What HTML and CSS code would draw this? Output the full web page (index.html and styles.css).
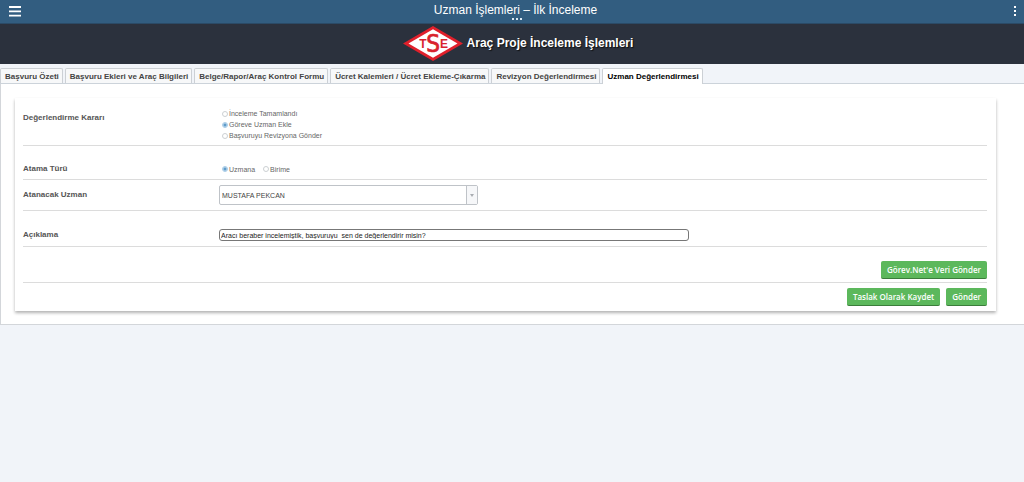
FILE: index.html
```html
<!DOCTYPE html>
<html lang="tr">
<head>
<meta charset="utf-8">
<meta name="viewport" content="width=device-width, initial-scale=1">
<title>Uzman İşlemleri – İlk İnceleme</title>
<link rel="stylesheet" href="styles.css">
</head>
<body>
<header class="topbar">
  <button class="icon-button" type="button" aria-label="Menü">
    <svg width="12" height="11" viewBox="0 0 12 11"><path d="M0 1h12M0 5.300h12M0 9.600h12" stroke="#fff" stroke-width="1.800"/></svg>
  </button>
  <h1 class="topbar-title">Uzman İşlemleri – İlk İnceleme
    <svg class="title-dots" width="10" height="2" viewBox="0 0 10 2"><path d="M0 0h2v2H0zM4 0h2v2H4zM8 0h2v2H8z" fill="#dbe8f3"/></svg>
  </h1>
  <button class="icon-button icon-button-end" type="button" aria-label="Diğer">
    <svg width="2" height="12" viewBox="0 0 2 12"><path d="M0 0h2v2H0zM0 4h2v2H0zM0 8h2v2H0z" fill="#fff"/></svg>
  </button>
</header>
<div class="brand">
  <svg class="brand-logo" width="60" height="36" viewBox="0 0 60 36" role="img" aria-label="TSE">
    <path d="M30 0L60 17.500L30 35L0 17.500Z" fill="#e0202b"/>
    <path d="M30 3.200L54.500 17.500L30 31.800L5.500 17.500Z" fill="#fff"/>
    <g fill="#d9232e" text-anchor="middle" class="logo-text">
      <text x="20" y="22" font-size="12">T</text>
      <text class="logo-tall" x="30" y="26" font-size="24" stroke="#d9232e" stroke-width="0.700">S</text>
      <text x="41" y="22" font-size="12">E</text>
    </g>
  </svg>
  <h2 class="brand-title">Araç Proje İnceleme İşlemleri</h2>
</div>
<nav class="tabs">
  <button class="tab" type="button">Başvuru Özeti</button>
  <button class="tab" type="button">Başvuru Ekleri ve Araç Bilgileri</button>
  <button class="tab" type="button">Belge/Rapor/Araç Kontrol Formu</button>
  <button class="tab" type="button">Ücret Kalemleri / Ücret Ekleme-Çıkarma</button>
  <button class="tab" type="button">Revizyon Değerlendirmesi</button>
  <button class="tab tab-active" type="button" aria-current="page">Uzman Değerlendirmesi</button>
</nav>
<main class="content">
  <form class="panel">
    <div class="row row-decision">
      <span class="label" id="decision">Değerlendirme Kararı</span>
      <div class="radios radios-stacked" role="radiogroup" aria-labelledby="decision">
        <label class="radio"><input type="radio" name="decision">İnceleme Tamamlandı</label>
        <label class="radio"><input type="radio" name="decision" checked>Göreve Uzman Ekle</label>
        <label class="radio"><input type="radio" name="decision">Başvuruyu Revizyona Gönder</label>
      </div>
    </div>
    <div class="row row-type">
      <span class="label" id="type">Atama Türü</span>
      <div class="radios" role="radiogroup" aria-labelledby="type">
        <label class="radio"><input type="radio" name="type" checked>Uzmana</label>
        <label class="radio"><input type="radio" name="type">Birime</label>
      </div>
    </div>
    <div class="row row-expert">
      <label class="label" for="expert">Atanacak Uzman</label>
      <div class="select-box">
        <select class="select" id="expert"><option>MUSTAFA PEKCAN</option></select>
        <span class="select-arrow"><svg width="4" height="3" viewBox="0 0 4 3"><path d="M0 0h4L2 3z" fill="#a9adb2"/></svg></span>
      </div>
    </div>
    <div class="row row-note">
      <label class="label" for="note">Açıklama</label>
      <input class="note" id="note" type="text" value="Aracı beraber incelemiştik, başvuruyu  sen de değerlendirir misin?">
    </div>
    <div class="actions actions-upper">
      <button class="button" type="button">Görev.Net'e Veri Gönder</button>
    </div>
    <div class="actions">
      <button class="button" type="button">Taslak Olarak Kaydet</button>
      <button class="button" type="submit">Gönder</button>
    </div>
  </form>
</main>
</body>
</html>
```
FILE: styles.css
```css
* { box-sizing: border-box; }

body {
  margin: 0;
  background: #f1f4f9;
  color: #555;
  font-family: "Liberation Sans", Arial, sans-serif;
  font-size: 7px;
}

button, input, select { font: inherit; color: inherit; }

.topbar {
  display: grid;
  grid-template-columns: 1fr auto 1fr;
  align-items: center;
  height: 24px;
  padding: 0 8px;
  background: #325d80;
  border-bottom: 1px solid #2b4a66;
}

.icon-button {
  display: flex;
  justify-self: start;
  padding: 0 1px 1px;
  border: 0;
  background: none;
}

.icon-button-end { justify-self: end; padding: 0; }

.topbar-title {
  position: relative;
  margin: 0;
  padding: 0 0 4px 7px;
  color: #fff;
  font-size: 12px;
  font-weight: 400;
  line-height: 14px;
}

.title-dots { position: absolute; left: 50%; bottom: 1px; }

.brand {
  display: flex;
  justify-content: center;
  align-items: center;
  gap: 4px;
  height: 40px;
  padding-left: 12px;
  background: #2b313d;
}

.logo-text { font-family: "Liberation Sans", Arial, sans-serif; font-weight: 700; }
.logo-tall { font-family: "Liberation Sans Narrow", "DejaVu Sans Condensed", sans-serif; font-weight: 400; }

.brand-title {
  margin: 0;
  color: #fff;
  font-size: 12px;
  line-height: 14px;
  padding-bottom: 2px;
  text-shadow: 1px 1px 1px #111;
}

.tabs {
  display: flex;
  gap: 2px;
  padding-top: 4px;
  border-bottom: 1px solid #ccd3da;
}

.tab {
  height: 15px;
  padding: 0 3px 0 4px;
  border: 1px solid #ccd0d5;
  border-bottom: 0;
  border-radius: 2px 2px 0 0;
  background: #f7f8f9;
  color: #444;
  font-size: 8px;
  font-weight: 700;
  line-height: 15px;
  white-space: nowrap;
}

.tab-active { margin-bottom: -1px; height: 16px; background: #fff; color: #000; }

.content {
  padding: 14px 28px 13px 14px;
  background: #fff;
  border-left: 1px solid #d3d6da;
  border-bottom: 1px solid #d3d6da;
}

.panel {
  padding: 0 9px 5px 8px;
  background: #fff;
  box-shadow: 0 2px 3px rgba(0, 0, 0, 0.3);
}

.row {
  display: grid;
  grid-template-columns: 196px 1fr;
  align-items: center;
  border-bottom: 1px solid #dcdcdc;
}

.row-decision { padding: 10px 0 4px; align-items: start; }
.row-type { padding: 17px 0 4px; }
.row-expert { padding: 5px 0; }
.row-note { padding: 18px 0 5px; }

.label { font-size: 8px; font-weight: 700; line-height: 12px; color: #555; }
.row-decision .label { padding-top: 4px; }

.radios { display: flex; gap: 8px; padding-left: 3px; }
.radios-stacked { flex-direction: column; gap: 0; }

.radio {
  display: flex;
  align-items: center;
  gap: 1px;
  line-height: 11px;
  color: #666;
}

.radio input {
  appearance: none;
  width: 6px;
  height: 6px;
  margin: 0;
  border: 1px solid #ccd0d3;
  border-radius: 50%;
  background: #fff;
}

.radio input:checked {
  border-color: #a8cbe6;
  background: radial-gradient(#5f9cca 1px, #c4def2 2px);
}

.select-box {
  display: flex;
  width: 100%;
  max-width: 259px;
  height: 20px;
  border: 1px solid #bfc3c8;
  border-radius: 2px;
  background: #fff;
}

.select {
  flex: 1;
  appearance: none;
  border: 0;
  padding: 0 2px;
  background: none;
  color: #444;
}

.select-arrow {
  display: flex;
  align-items: center;
  justify-content: center;
  width: 11px;
  border-left: 1px solid #bfc3c8;
  background: #f6f7f9;
}

.note {
  width: 100%;
  max-width: 470px;
  height: 12px;
  padding: 0 1px;
  line-height: 10px;
  border: 1px solid #777;
  border-radius: 3px;
  outline: 0;
  background: #fff;
  color: #222;
}

.actions {
  display: flex;
  justify-content: flex-end;
  gap: 6px;
  padding-top: 5px;
}

.actions-upper {
  padding: 14px 0 3px;
  border-bottom: 1px solid #dcdcdc;
}

.button {
  height: 18px;
  padding: 0 6px;
  border: 0;
  border-bottom: 1px solid #3b7d3b;
  border-radius: 2px;
  background: #5cb85c;
  color: #fff;
  font-family: "Open Sans", "Noto Sans", sans-serif;
  font-size: 8px;
  font-weight: 600;
  line-height: 17px;
}
```
